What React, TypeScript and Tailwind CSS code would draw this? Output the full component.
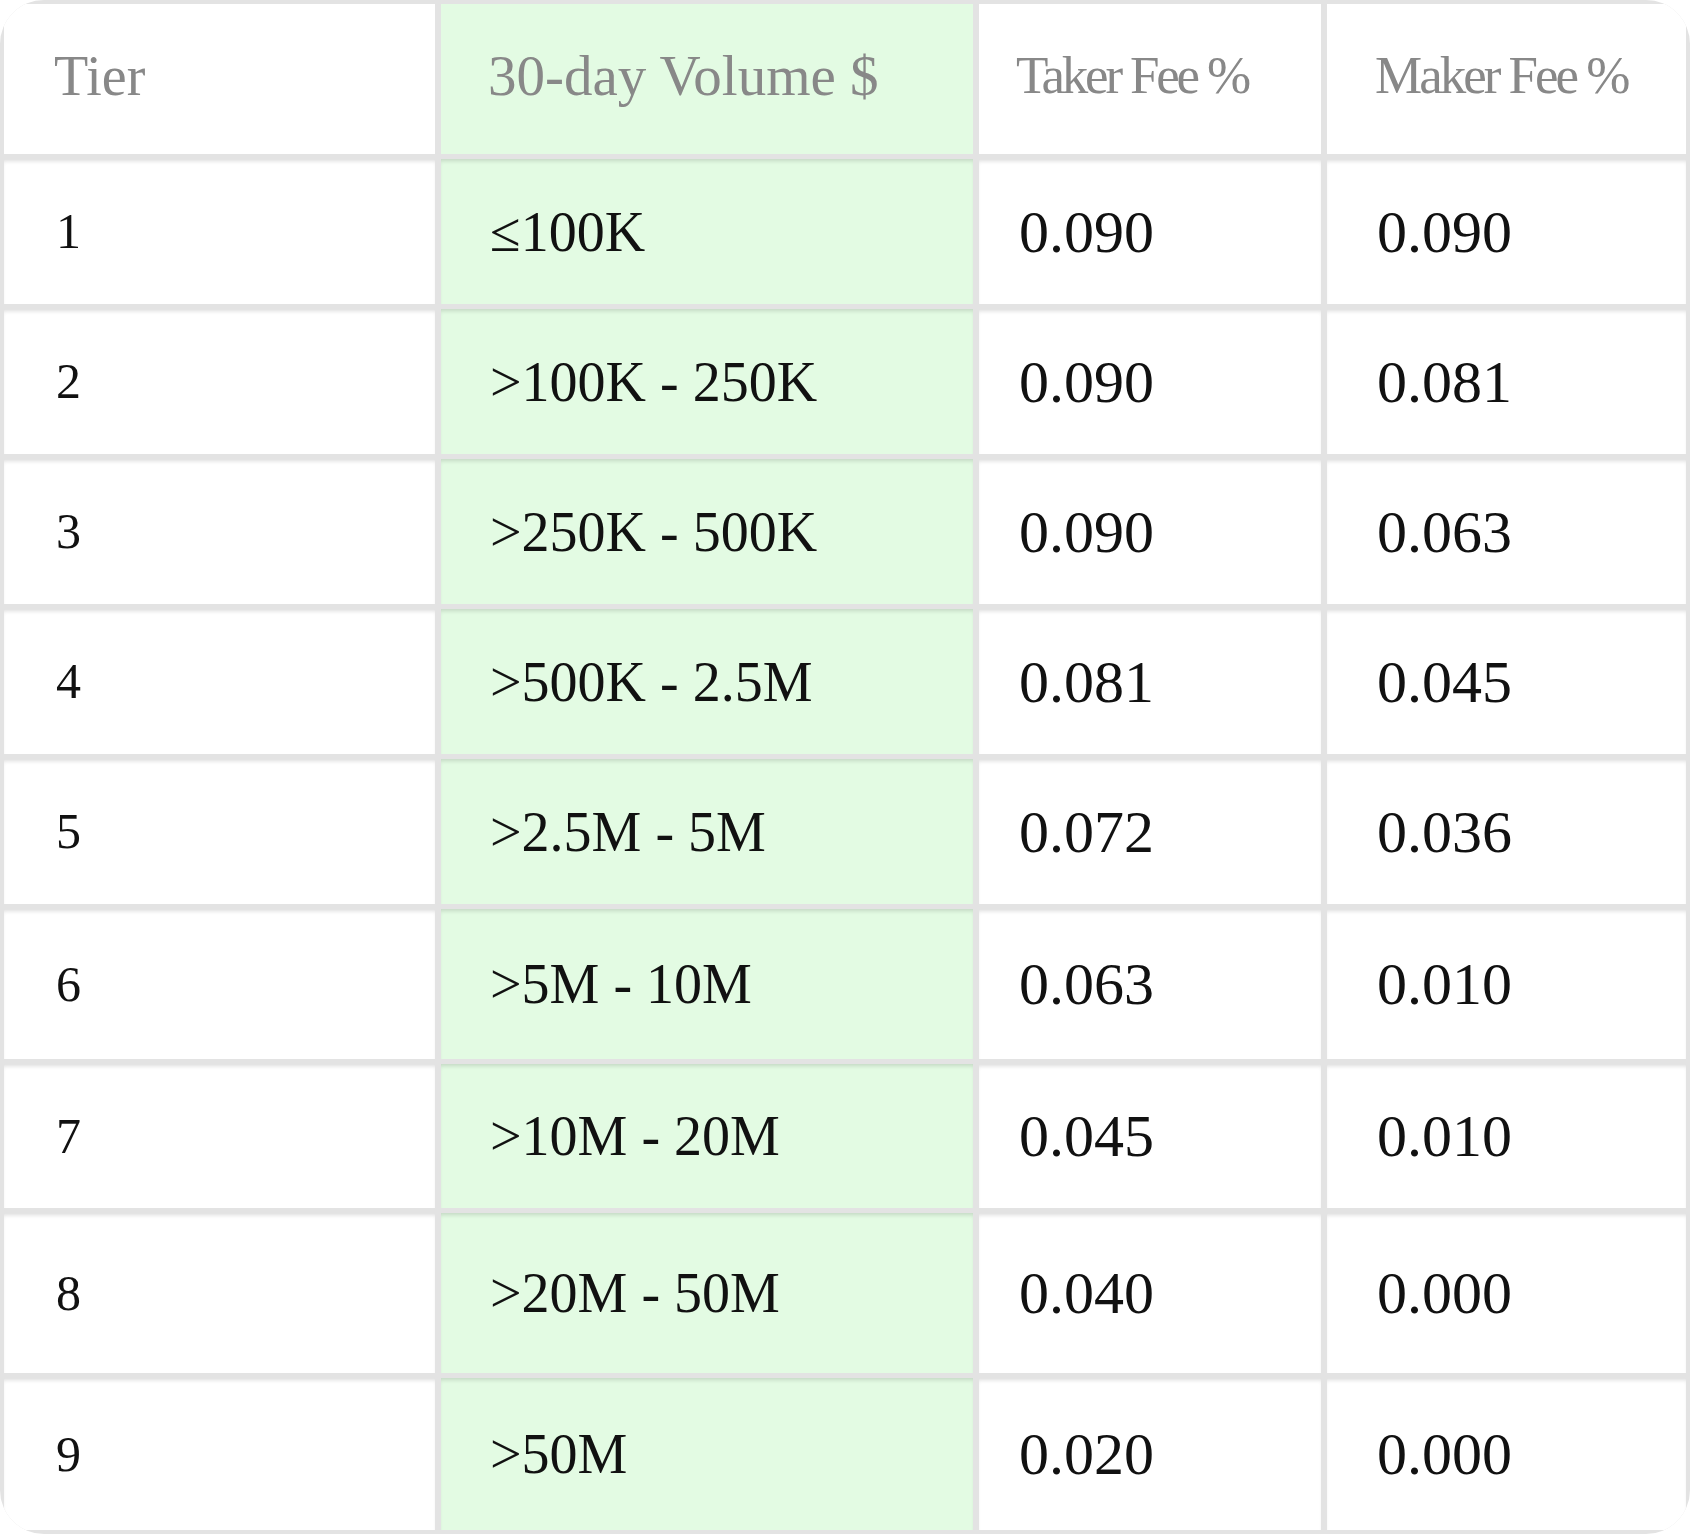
const ROWS = [
  { tier: "1", volume: "≤100K", taker: "0.090", maker: "0.090", h: "h-[145px]" },
  { tier: "2", volume: ">100K - 250K", taker: "0.090", maker: "0.081", h: "h-[145px]" },
  { tier: "3", volume: ">250K - 500K", taker: "0.090", maker: "0.063", h: "h-[145px]" },
  { tier: "4", volume: ">500K - 2.5M", taker: "0.081", maker: "0.045", h: "h-[145px]" },
  { tier: "5", volume: ">2.5M - 5M", taker: "0.072", maker: "0.036", h: "h-[145px]" },
  { tier: "6", volume: ">5M - 10M", taker: "0.063", maker: "0.010", h: "h-[150px]" },
  { tier: "7", volume: ">10M - 20M", taker: "0.045", maker: "0.010", h: "h-[144px]" },
  { tier: "8", volume: ">20M - 50M", taker: "0.040", maker: "0.000", h: "h-[160px]" },
  { tier: "9", volume: ">50M", taker: "0.020", maker: "0.000", h: "h-[152px]" },
];

const cell = "flex items-center shadow-[inset_0_4px_4px_-2px_rgba(0,0,0,0.14)]";

export default function App() {
  return (
    <div className="h-[1534px] w-[1690px] bg-white font-['Liberation_Serif','Times_New_Roman',serif]">
      <div className="grid grid-cols-[431px_532px_342px_359px] gap-x-[6px] gap-y-[5px] overflow-hidden rounded-[44px] bg-[#e3e3e3] p-[4px]">
        {/* header */}
        <div className="flex h-[150px] items-center bg-white pb-[6px] pl-[50px] text-[56px] text-[#888888]">Tier</div>
        <div className="flex h-[150px] items-center bg-[#e3fbe3] pb-[6px] pl-[47px] text-[57px] text-[#888888]">
          30-day Volume $
        </div>
        <div className="flex h-[150px] items-center bg-white pb-[6px] pl-[37px] text-[53px] tracking-[-3.2px] text-[#888888]">
          Taker Fee %
        </div>
        <div className="flex h-[150px] items-center bg-white pb-[6px] pl-[48px] text-[53px] tracking-[-3px] text-[#888888]">
          Maker Fee %
        </div>

        {ROWS.map((r) => (
          <div key={r.tier} className="contents">
            <div className={`${cell} ${r.h} bg-white pl-[52px] text-[50px] text-[#111111]`}>{r.tier}</div>
            <div className={`${cell} ${r.h} bg-[#e3fbe3] pl-[49px] text-[56px] text-[#111111]`}>{r.volume}</div>
            <div className={`${cell} ${r.h} bg-white pl-[40px] text-[60px] text-[#111111]`}>{r.taker}</div>
            <div className={`${cell} ${r.h} bg-white pl-[50px] text-[60px] text-[#111111]`}>{r.maker}</div>
          </div>
        ))}
      </div>
    </div>
  );
}
